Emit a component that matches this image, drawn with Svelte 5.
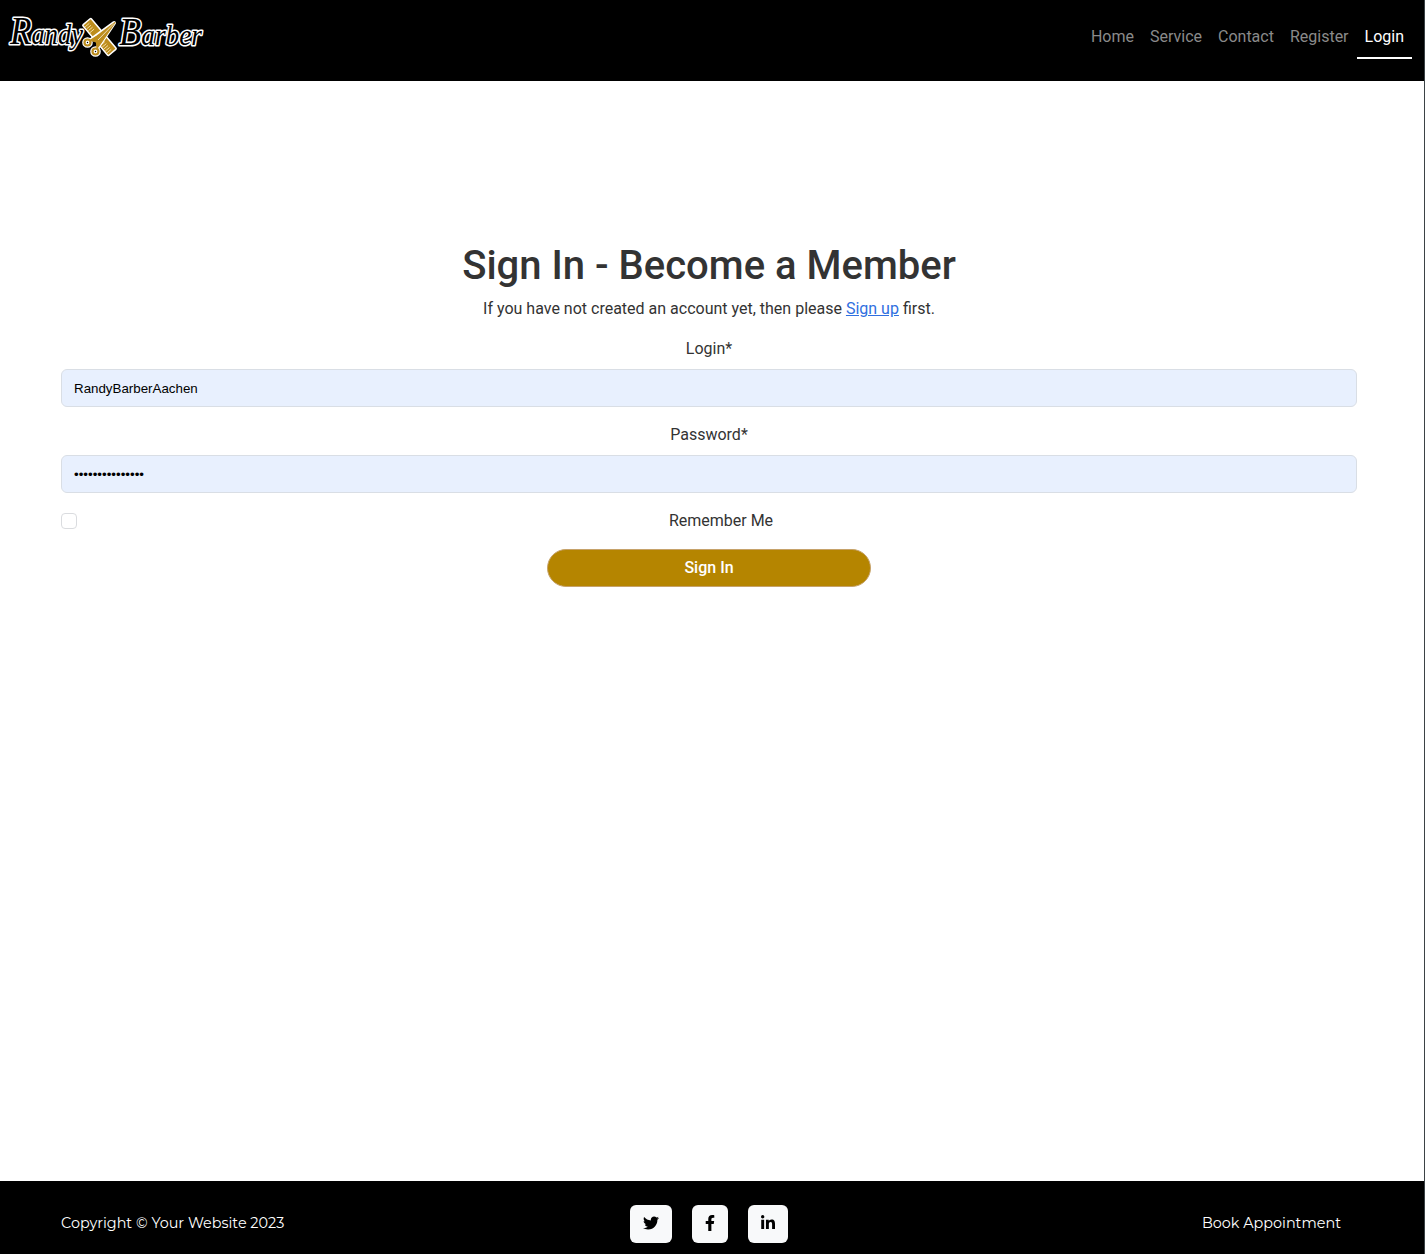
<script>
  const links = ['Home', 'Service', 'Contact', 'Register', 'Login'];
  let active = $state('Login');
  let login = $state('RandyBarberAachen');
  let password = $state('barber-password');
  let remember = $state(false);

  // Width and path of each social icon on a 512-unit-high grid
  const socials = [
    { name: 'Twitter', w: 512, d: 'M459.37 151.716c.325 4.548.325 9.097.325 13.645 0 138.72-105.583 298.558-298.558 298.558-59.452 0-114.68-17.219-161.137-47.106 8.447.974 16.568 1.299 25.34 1.299 49.055 0 94.213-16.568 130.274-44.832-46.132-.975-84.792-31.188-98.112-72.772 6.498.974 12.995 1.624 19.818 1.624 9.421 0 18.843-1.3 27.614-3.573-48.081-9.747-84.143-51.98-84.143-102.985v-1.299c13.969 7.797 30.214 12.67 47.431 13.319-28.264-18.843-46.781-51.005-46.781-87.391 0-19.492 5.197-37.36 14.294-52.954 51.655 63.675 129.3 105.258 216.365 109.807-1.624-7.797-2.599-15.918-2.599-24.04 0-57.828 46.782-104.934 104.934-104.934 30.213 0 57.502 12.67 76.67 33.137 23.715-4.548 46.456-13.32 66.599-25.34-7.798 24.366-24.366 44.833-46.132 57.827 21.117-2.273 41.584-8.122 60.426-16.243-14.292 20.791-32.161 39.308-52.628 54.253z' },
    { name: 'Facebook', w: 320, d: 'M279.14 288l14.22-92.66h-88.91v-60.13c0-25.35 12.42-50.06 52.24-50.06h40.42V6.26S260.43 0 225.36 0c-73.22 0-121.08 44.38-121.08 124.72v70.62H22.89V288h81.39v224h100.17V288z' },
    { name: 'LinkedIn', w: 448, d: 'M100.28 448H7.4V148.9h92.88zM53.79 108.1C24.09 108.1 0 83.5 0 53.8a53.79 53.79 0 0 1 107.58 0c0 29.7-24.1 54.3-53.79 54.3zM447.9 448h-92.68V302.4c0-34.7-.7-79.2-48.29-79.2-48.29 0-55.69 37.7-55.69 76.7V448h-92.78V148.9h89.08v40.8h1.3c12.4-23.5 42.69-48.3 87.88-48.3 94 0 111.28 61.9 111.28 142.3V448z' }
  ];
</script>

<div class="page">
  <header>
    <a class="brand" href="#home" aria-label="Randy Barber">
      <svg width="214" height="64" viewBox="0 0 214 64">
        <g class="word">
          <text x="10" y="44" textLength="73" lengthAdjust="spacingAndGlyphs"><tspan class="cap">R</tspan>andy</text>
          <text x="119" y="45" textLength="83" lengthAdjust="spacingAndGlyphs"><tspan class="cap">B</tspan>arber</text>
        </g>
        <!-- comb -->
        <g transform="translate(99.500 37) rotate(50)">
          <rect x="-20" y="-5.500" width="40" height="11" rx="1" fill="#bd8d1d" stroke="#fff" stroke-width="1.500" />
          <path d="M-17 -1V4.500M-14.500 -1V4.500M-12 -1V4.500M-9.500 -1V4.500M7 -1V4.500M9.500 -1V4.500M12 -1V4.500M14.500 -1V4.500M17 -1V4.500" stroke="#f5dfa5" stroke-width=".9" />
        </g>
        <!-- scissors -->
        <g fill="none" stroke-linejoin="round">
          <g stroke="#fff" stroke-width="4.600">
            <circle cx="87.500" cy="42.500" r="3" /><circle cx="95.500" cy="51.500" r="3" />
            <path d="M90 40.500L114 23L97 48.500" stroke-width="4" />
          </g>
          <path d="M90 40.500L97 36L115 22.500L101 43L97 48.500L96.500 42Z" fill="#bd8d1d" stroke="#bd8d1d" stroke-width="1.200" />
          <path d="M98 40L114 23.500" stroke="#fff" stroke-width=".7" />
          <g stroke="#bd8d1d" stroke-width="2.200">
            <circle cx="87.500" cy="42.500" r="3" /><circle cx="95.500" cy="51.500" r="3" />
          </g>
        </g>
      </svg>
    </a>
    <nav>
      {#each links as link}
        <a href="#{link.toLowerCase()}" class:active={active === link} onclick={() => (active = link)}>{link}</a>
      {/each}
    </nav>
  </header>

  <main>
    <h1>Sign In - Become a Member</h1>
    <p>If you have not created an account yet, then please <a href="#register">Sign up</a> first.</p>
    <form onsubmit={(e) => e.preventDefault()}>
      <label for="login">Login*</label>
      <input id="login" class="field" type="text" bind:value={login} />
      <label for="password">Password*</label>
      <input id="password" class="field" type="password" bind:value={password} />
      <div class="check">
        <input id="remember" type="checkbox" bind:checked={remember} />
        <label for="remember">Remember Me</label>
      </div>
      <button type="submit">Sign In</button>
    </form>
  </main>

  <footer>
    <span class="copy">Copyright © Your Website 2023</span>
    <div class="socials">
      {#each socials as s}
        <a href="#{s.name.toLowerCase()}" aria-label={s.name}>
          <svg viewBox="0 0 {s.w} 512" height="16" width={s.w / 32}><path d={s.d} /></svg>
        </a>
      {/each}
    </div>
    <a class="book" href="#book">Book Appointment</a>
  </footer>
</div>

<style>
  :global(body) { margin: 0; background: #fff; }
  .page, .page * { box-sizing: border-box; }
  .page {
    height: 1254px;
    overflow: hidden;
    display: flex;
    flex-direction: column;
    border-right: 1px solid #3b4245;
    font: 400 16px/24px Roboto, sans-serif;
    color: #333;
  }
  header {
    height: 81px;
    flex: none;
    background: #000;
    display: flex;
    justify-content: space-between;
    align-items: flex-start;
    padding-right: 12px;
  }
  .brand svg { display: block; overflow: visible; }
  .word text {
    font: italic 400 30px "Liberation Serif", serif;
    fill: #000;
    stroke: #fff;
    stroke-width: 3.2px;
    stroke-linejoin: round;
    stroke-linecap: round;
    paint-order: stroke;
  }
  .word .cap { font-size: 40px; }
  nav { display: flex; padding-top: 16px; }
  nav a {
    padding: 9px 8px 8px;
    color: #8a8a8a;
    text-decoration: none;
    border-bottom: 2px solid transparent;
  }
  nav a.active { color: #fff; border-color: #fff; }
  main {
    flex: 1;
    padding: 161px 67px 0 61px;
    text-align: center;
  }
  h1 { margin: 0 0 7px; font-size: 40px; line-height: 48px; font-weight: 500; }
  p { margin: 0 0 16px; }
  p a { color: #2f6fe0; }
  form { display: flex; flex-direction: column; align-items: stretch; }
  form > label { margin-bottom: 8px; }
  .field {
    height: 38px;
    margin: 0 0 16px;
    padding: 6px 12px;
    border: 1px solid #d9dee5;
    border-radius: 6px;
    background: #e8f0fe;
    color: #000;
    font: 13.333px "Liberation Sans", Arial, sans-serif;
    outline: none;
  }
  .check { display: flex; align-items: flex-start; margin-bottom: 16px; }
  .check input {
    appearance: none;
    width: 16px;
    height: 16px;
    margin: 4px 8px 0 0;
    border: 1px solid #dadcdf;
    border-radius: 4px;
    background: #fff;
  }
  .check input:checked { background: #b58500; }
  .check label { flex: 1; }
  button {
    width: 324px;
    height: 38px;
    align-self: center;
    border: 1px solid #c6a26a;
    border-radius: 19px;
    background: #b58500;
    color: #fff;
    font: 500 16px/24px Roboto, sans-serif;
    padding: 0;
  }
  footer {
    height: 73px;
    flex: none;
    background: #000;
    display: grid;
    grid-template-columns: 1fr auto 1fr;
    align-items: start;
    padding: 24px 67px 0 61px;
    color: #fff;
    font: 400 14.4px/36px Montserrat, "Open Sans", sans-serif;
  }
  .socials { display: flex; gap: 20px; }
  .socials a {
    height: 38px;
    padding: 0 13px 2px;
    display: flex;
    align-items: center;
    border-radius: 6px;
    background: #f8f9fa;
  }
  .book { justify-self: end; margin-right: 16px; color: #fff; text-decoration: none; }
</style>
